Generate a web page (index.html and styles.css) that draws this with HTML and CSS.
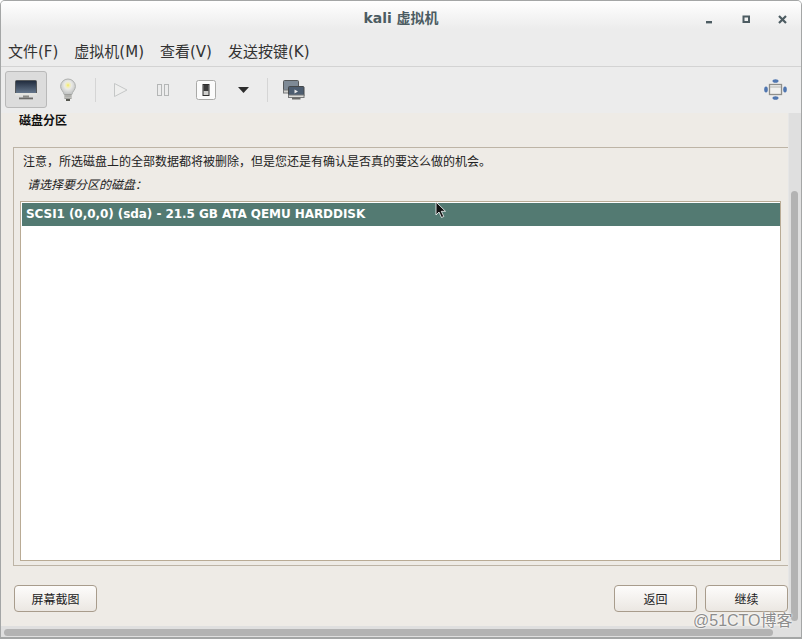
FILE: index.html
```html
<!DOCTYPE html>
<html lang="zh-CN">
<head>
<meta charset="utf-8">
<title>kali 虚拟机</title>
<link rel="stylesheet" href="styles.css">
</head>
<body>
<div class="window">
  <header class="chrome">
    <div class="titlebar">
      <span class="title">kali 虚拟机</span>
      <div class="wm-buttons">
        <svg class="wm" viewBox="0 0 9 9"><rect x="1" y="6" width="6" height="2.4" fill="#4d5c62"/></svg>
        <svg class="wm" viewBox="0 0 9 9"><rect x="1.5" y="1.5" width="5.5" height="5.5" fill="none" stroke="#4d5c62" stroke-width="2"/></svg>
        <svg class="wm" viewBox="0 0 9 9"><path d="M1 1l7 7M8 1l-7 7" stroke="#4d5c62" stroke-width="2.2"/></svg>
      </div>
    </div>
    <nav class="menubar">
      <span class="menu-item">文件(F)</span>
      <span class="menu-item">虚拟机(M)</span>
      <span class="menu-item">查看(V)</span>
      <span class="menu-item">发送按键(K)</span>
    </nav>
  </header>
  <div class="toolbar">
    <div class="tool active">
      <svg width="24" height="22" viewBox="0 0 24 22">
        <defs><linearGradient id="scr" x1="0" y1="0" x2="0" y2="1"><stop offset="0" stop-color="#1f2a3c"/><stop offset="1" stop-color="#6d7f95"/></linearGradient></defs>
        <rect x="1.5" y="1.5" width="21" height="14" rx="1" fill="url(#scr)" stroke="#55585a"/>
        <rect x="1" y="14" width="22" height="2.5" fill="#e4e4e0"/>
        <rect x="9" y="16.5" width="6" height="2" fill="#8a8a86"/>
        <rect x="5" y="18.5" width="14" height="1.8" fill="#6a6a68"/>
      </svg>
    </div>
    <div class="tool">
      <svg width="18" height="24" viewBox="0 0 18 24">
        <defs><radialGradient id="bulb" cx=".5" cy=".4" r=".55"><stop offset="0" stop-color="#f2e85a"/><stop offset=".2" stop-color="#f3eeb0"/><stop offset=".45" stop-color="#e9e9e6"/><stop offset="1" stop-color="#c4c6c6"/></radialGradient></defs>
        <path d="M9 1a7.4 7.4 0 0 0-7.4 7.4c0 3.4 3 5 3.5 8.100h7.800c.5-3.100 3.500-4.700 3.500-8.100A7.400 7.400 0 0 0 9 1z" fill="url(#bulb)" stroke="#aeb0ae"/>
        <rect x="5.500" y="16.500" width="7" height="4.500" fill="#8d8e8a"/>
        <path d="M5.500 18h7M5.500 19.800h7" stroke="#d4d4d0"/>
        <rect x="7" y="21" width="4" height="2" fill="#55564f"/>
      </svg>
    </div>
    <span class="sep"></span>
    <div class="tool">
      <svg width="16" height="16" viewBox="0 0 16 16"><path d="M1.500 1.500v13l12.500-6.500z" fill="#efefee" stroke="#c5c7c7"/></svg>
    </div>
    <div class="tool">
      <svg width="14" height="14" viewBox="0 0 14 14"><rect x="1.500" y="1.500" width="4" height="11" fill="#ececec" stroke="#b4b6b6"/><rect x="8.500" y="1.500" width="4" height="11" fill="#ececec" stroke="#b4b6b6"/></svg>
    </div>
    <div class="tool shifted">
      <svg width="22" height="22" viewBox="0 0 22 22">
        <rect x="1.500" y="1.500" width="19" height="19" rx="2" fill="#fbfbfb" stroke="#a9a9a7"/>
        <rect x="8" y="5.500" width="6" height="11" fill="#cfcfcd" stroke="#2e2e2e"/>
        <rect x="8.500" y="6" width="5" height="6" fill="#3a3a3a"/>
      </svg>
    </div>
    <div class="tool narrow">
      <svg width="11" height="6" viewBox="0 0 11 6"><path d="M0 0h11L5.500 6z" fill="#2d2d2d"/></svg>
    </div>
    <span class="sep"></span>
    <div class="tool">
      <svg width="23" height="22" viewBox="0 0 23 22">
        <rect x="1.500" y="1.500" width="15" height="11" rx="1" fill="#7e8a96" stroke="#55585a"/>
        <rect x="1.500" y="11" width="15" height="3" fill="#d2d2ce" stroke="#77787a"/>
        <rect x="6.500" y="7.500" width="15.500" height="10" rx="1" fill="#4d5d70" stroke="#45484a"/>
        <path d="M12.500 10.500v4l3.500-2z" fill="#e8e8e8"/>
        <rect x="6.500" y="16" width="15.500" height="2.500" fill="#dcdcd8" stroke="#77787a"/>
        <rect x="10" y="18.500" width="8.500" height="2" fill="#6a6a68"/>
      </svg>
    </div>
    <div class="tool-spacer"></div>
    <div class="tool end">
      <svg width="23" height="21" viewBox="0 0 23 21">
        <ellipse cx="11.500" cy="2" rx="3" ry="1.800" fill="#4f76b0"/>
        <ellipse cx="11.500" cy="19" rx="3" ry="1.800" fill="#4f76b0"/>
        <ellipse cx="2" cy="10.500" rx="1.800" ry="3" fill="#4f76b0"/>
        <ellipse cx="21" cy="10.500" rx="1.800" ry="3" fill="#4f76b0"/>
        <rect x="5.500" y="5.500" width="12" height="10" fill="#f0f0ee" stroke="#8e8e8a" stroke-width="1.300"/>
        <path d="M6 8h11" stroke="#b5b5b0"/>
      </svg>
    </div>
  </div>
  <div class="viewer">
    <main class="guest">
      <h1 class="heading">磁盘分区</h1>
      <section class="frame">
        <p class="note">注意，所选磁盘上的全部数据都将被删除，但是您还是有确认是否真的要这么做的机会。</p>
        <p class="prompt">请选择要分区的磁盘：</p>
        <div class="listbox">
          <div class="row-selected">SCSI1 (0,0,0) (sda) - 21.5 GB ATA QEMU HARDDISK</div>
        </div>
      </section>
      <footer class="actions">
        <button class="btn">屏幕截图</button>
        <span class="action-gap"></span>
        <button class="btn">返回</button>
        <button class="btn">继续</button>
      </footer>
    </main>
    <div class="vscroll"><div class="vthumb"></div></div>
    <div class="hscroll"><div class="hthumb"></div></div>
    <div class="corner"></div>
  </div>
  <svg class="cursor" width="12" height="18" viewBox="0 0 12 18"><path d="M1 1v13l3-3 2.500 5.500 2.300-1-2.500-5.200h4.200z" fill="#111" stroke="#fff" stroke-width=".8"/></svg>
  <span class="watermark">@51CTO博客</span>
</div>
</body>
</html>
```

FILE: styles.css
```css
* { box-sizing: border-box; }
html, body { margin: 0; padding: 0; }
body {
  width: 802px;
  height: 639px;
  overflow: hidden;
  background: #fff;
  font-family: "DejaVu Sans", "Noto Sans CJK SC", sans-serif;
}
.window {
  position: relative;
  width: 802px;
  height: 639px;
  display: flex;
  flex-direction: column;
  background: #ececec;
  border: 1px solid #a4a6a6;
  border-bottom-width: 2px;
  border-radius: 5px 5px 0 0;
  overflow: hidden;
}
.chrome {
  height: 66px;
  background: linear-gradient(#ffffff 0, #ececec 28px, #ececec 100%);
  border-bottom: 1px solid #d3d3d3;
}
.titlebar {
  position: relative;
  height: 36px;
  padding-bottom: 4px;
  display: flex;
  align-items: center;
  justify-content: center;
}
.title {
  font-size: 14px;
  font-weight: 700;
  color: #4c5c62;
}
.wm-buttons {
  position: absolute;
  right: 14px;
  top: 14px;
  display: flex;
  gap: 27.500px;
}
.wm { width: 9px; height: 9px; display: block; }
.menubar {
  height: 29px;
  display: flex;
  align-items: center;
  gap: 16px;
  padding: 0 0 2px 7px;
  font-size: 15px;
  color: #333;
}
.toolbar {
  height: 46px;
  display: flex;
  align-items: center;
  padding: 0 4px 1px;
  background: #ececec;
}
.tool {
  width: 42px;
  height: 37px;
  display: flex;
  align-items: center;
  justify-content: center;
  flex: none;
}
.tool.narrow { width: 35px; }
.tool.shifted { padding-left: 1px; }
.tool.end { padding-right: 1px; }
.tool.active {
  background: #dcdcdc;
  border: 1px solid #b9b9b9;
  border-radius: 3px;
}
.sep {
  width: 1px;
  height: 24px;
  margin: 0 4px 0 6px;
  background: #d5d5d5;
  flex: none;
}
.tool-spacer { flex: 1; }
.viewer {
  flex: 1;
  min-height: 0;
  display: grid;
  grid-template-columns: 787px 13px;
  grid-template-rows: 513px 11px;
}
.guest {
  background: #eeebe6;
  display: flex;
  flex-direction: column;
  padding: 0 0 0 12px;
  overflow: hidden;
}
.heading {
  margin: 0;
  height: 34px;
  padding: 0 0 0 6px;
  font-size: 12px;
  line-height: 16px;
  font-weight: 700;
  color: #111;
}
.frame {
  height: 419px;
  display: flex;
  flex-direction: column;
  border: 1px solid #bdb4a6;
  border-right: 0;
  padding: 0 7px 4px 6px;
}
.note {
  margin: 0;
  height: 29px;
  padding-left: 3px;
  font-size: 12px;
  line-height: 28px;
  color: #222;
}
.prompt {
  margin: 0;
  height: 24px;
  padding-left: 7px;
  font-size: 12px;
  line-height: 16px;
  font-style: italic;
  color: #222;
}
.listbox {
  flex: 1;
  background: #fff;
  border: 1px solid #b9ab95;
  padding: 1px 0 0 1px;
}
.row-selected {
  height: 23px;
  padding-left: 4px;
  background: #537a72;
  color: #fff;
  font-size: 12px;
  font-weight: 700;
  letter-spacing: -0.06px;
  line-height: 23px;
}
.actions {
  display: flex;
  gap: 8px;
  padding: 19px 0 0 1px;
}
.action-gap { flex: 1; }
.btn {
  width: 83px;
  height: 27px;
  border: 1px solid #a89c8c;
  border-radius: 4px;
  background: linear-gradient(#fdfcfb, #ebe7e2);
  font-family: "Noto Sans CJK SC", sans-serif;
  font-size: 12px;
  color: #222;
  padding: 0;
}
.vscroll {
  background: #dfdfdf;
  border-left: 1px solid #e6e6e6;
  padding: 78px 3px 5px 2px;
}
.vthumb {
  height: 430px;
  background: #b3b3b3;
  border-radius: 4px;
}
.hscroll {
  background: #dfdfdf;
  padding: 3px 15px 1px 3px;
}
.hthumb {
  height: 7px;
  background: #b3b3b3;
  border-radius: 4px;
}
.corner { background: #dfdfdf; }
.cursor {
  position: absolute;
  left: 434px;
  top: 200px;
}
.watermark {
  position: absolute;
  left: 692px;
  top: 610px;
  font-family: "Liberation Sans", "Noto Sans CJK SC", sans-serif;
  font-size: 16px;
  line-height: 20px;
  color: #8d8d8d;
  text-shadow: 0 0 2px #fff, 0 0 2px #fff;
}
```
